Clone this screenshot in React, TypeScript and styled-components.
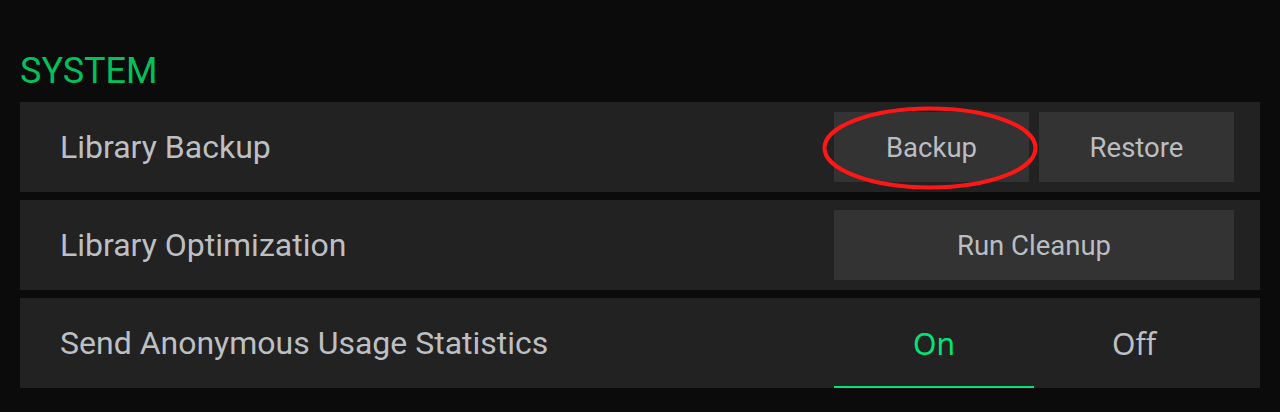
import React, { useState } from "react";
import styled, { createGlobalStyle } from "styled-components";

const GlobalStyle = createGlobalStyle`
  html, body {
    margin: 0;
    padding: 0;
    background: #0b0b0b;
  }
  body {
    font-family: Roboto, "Noto Sans", "Liberation Sans", sans-serif;
  }
`;

const Page = styled.div`
  width: 1280px;
  height: 412px;
  box-sizing: border-box;
  padding: 50px 20px 0;
  background: #0b0b0b;
`;

const Heading = styled.h2`
  margin: 0 0 10px;
  font-family: Roboto, sans-serif;
  font-weight: 400;
  font-size: 36px;
  line-height: 42px;
  color: #00c25a;
`;

const List = styled.div`
  display: flex;
  flex-direction: column;
  gap: 8px;
`;

const Row = styled.div`
  display: flex;
  align-items: center;
  justify-content: space-between;
  height: 90px;
  box-sizing: border-box;
  padding: 10px 26px 10px 40px;
  background: #222222;
`;

const Label = styled.span`
  font-family: Roboto, sans-serif;
  font-size: 32px;
  color: #bdbfc2;
`;

const Actions = styled.div`
  display: flex;
  gap: 10px;
  width: 400px;
  height: 70px;
`;

const Button = styled.button`
  position: relative;
  flex: 1;
  border: none;
  margin: 0;
  padding: 0;
  background: #333333;
  color: #babdc1;
  font-family: Roboto, sans-serif;
  font-size: 27.5px;
  cursor: pointer;
`;

const Highlight = styled.svg`
  position: absolute;
  left: -13px;
  top: -7px;
  width: 218px;
  height: 86px;
  overflow: visible;
  pointer-events: none;
`;

const Toggle = styled.div`
  display: flex;
  width: 400px;
  align-self: stretch;
  margin: -10px 0;
`;

const ToggleOption = styled.button<{ $active?: boolean }>`
  flex: 1;
  border: none;
  margin: 0;
  padding: 0;
  background: transparent;
  font-family: "Noto Sans", "Open Sans", sans-serif;
  font-size: 30px;
  color: ${(p) => (p.$active ? "#00e676" : "#bdbfc2")};
  border-bottom: 2px solid ${(p) => (p.$active ? "#00e676" : "transparent")};
  padding-top: 2px;
  cursor: pointer;
`;

export default function App() {
  const [stats, setStats] = useState(true);
  return (
    <Page>
      <GlobalStyle />
      <Heading>SYSTEM</Heading>
      <List>
        <Row>
          <Label>Library Backup</Label>
          <Actions>
            <Button>
              Backup
              <Highlight viewBox="0 0 218 86">
                <ellipse
                  cx="109"
                  cy="43"
                  rx="105.5"
                  ry="39.5"
                  fill="none"
                  stroke="#ff1717"
                  strokeWidth="4"
                />
              </Highlight>
            </Button>
            <Button>Restore</Button>
          </Actions>
        </Row>
        <Row>
          <Label>Library Optimization</Label>
          <Actions>
            <Button>Run Cleanup</Button>
          </Actions>
        </Row>
        <Row>
          <Label>Send Anonymous Usage Statistics</Label>
          <Toggle>
            <ToggleOption $active={stats} onClick={() => setStats(true)}>
              On
            </ToggleOption>
            <ToggleOption $active={!stats} onClick={() => setStats(false)}>
              Off
            </ToggleOption>
          </Toggle>
        </Row>
      </List>
    </Page>
  );
}
